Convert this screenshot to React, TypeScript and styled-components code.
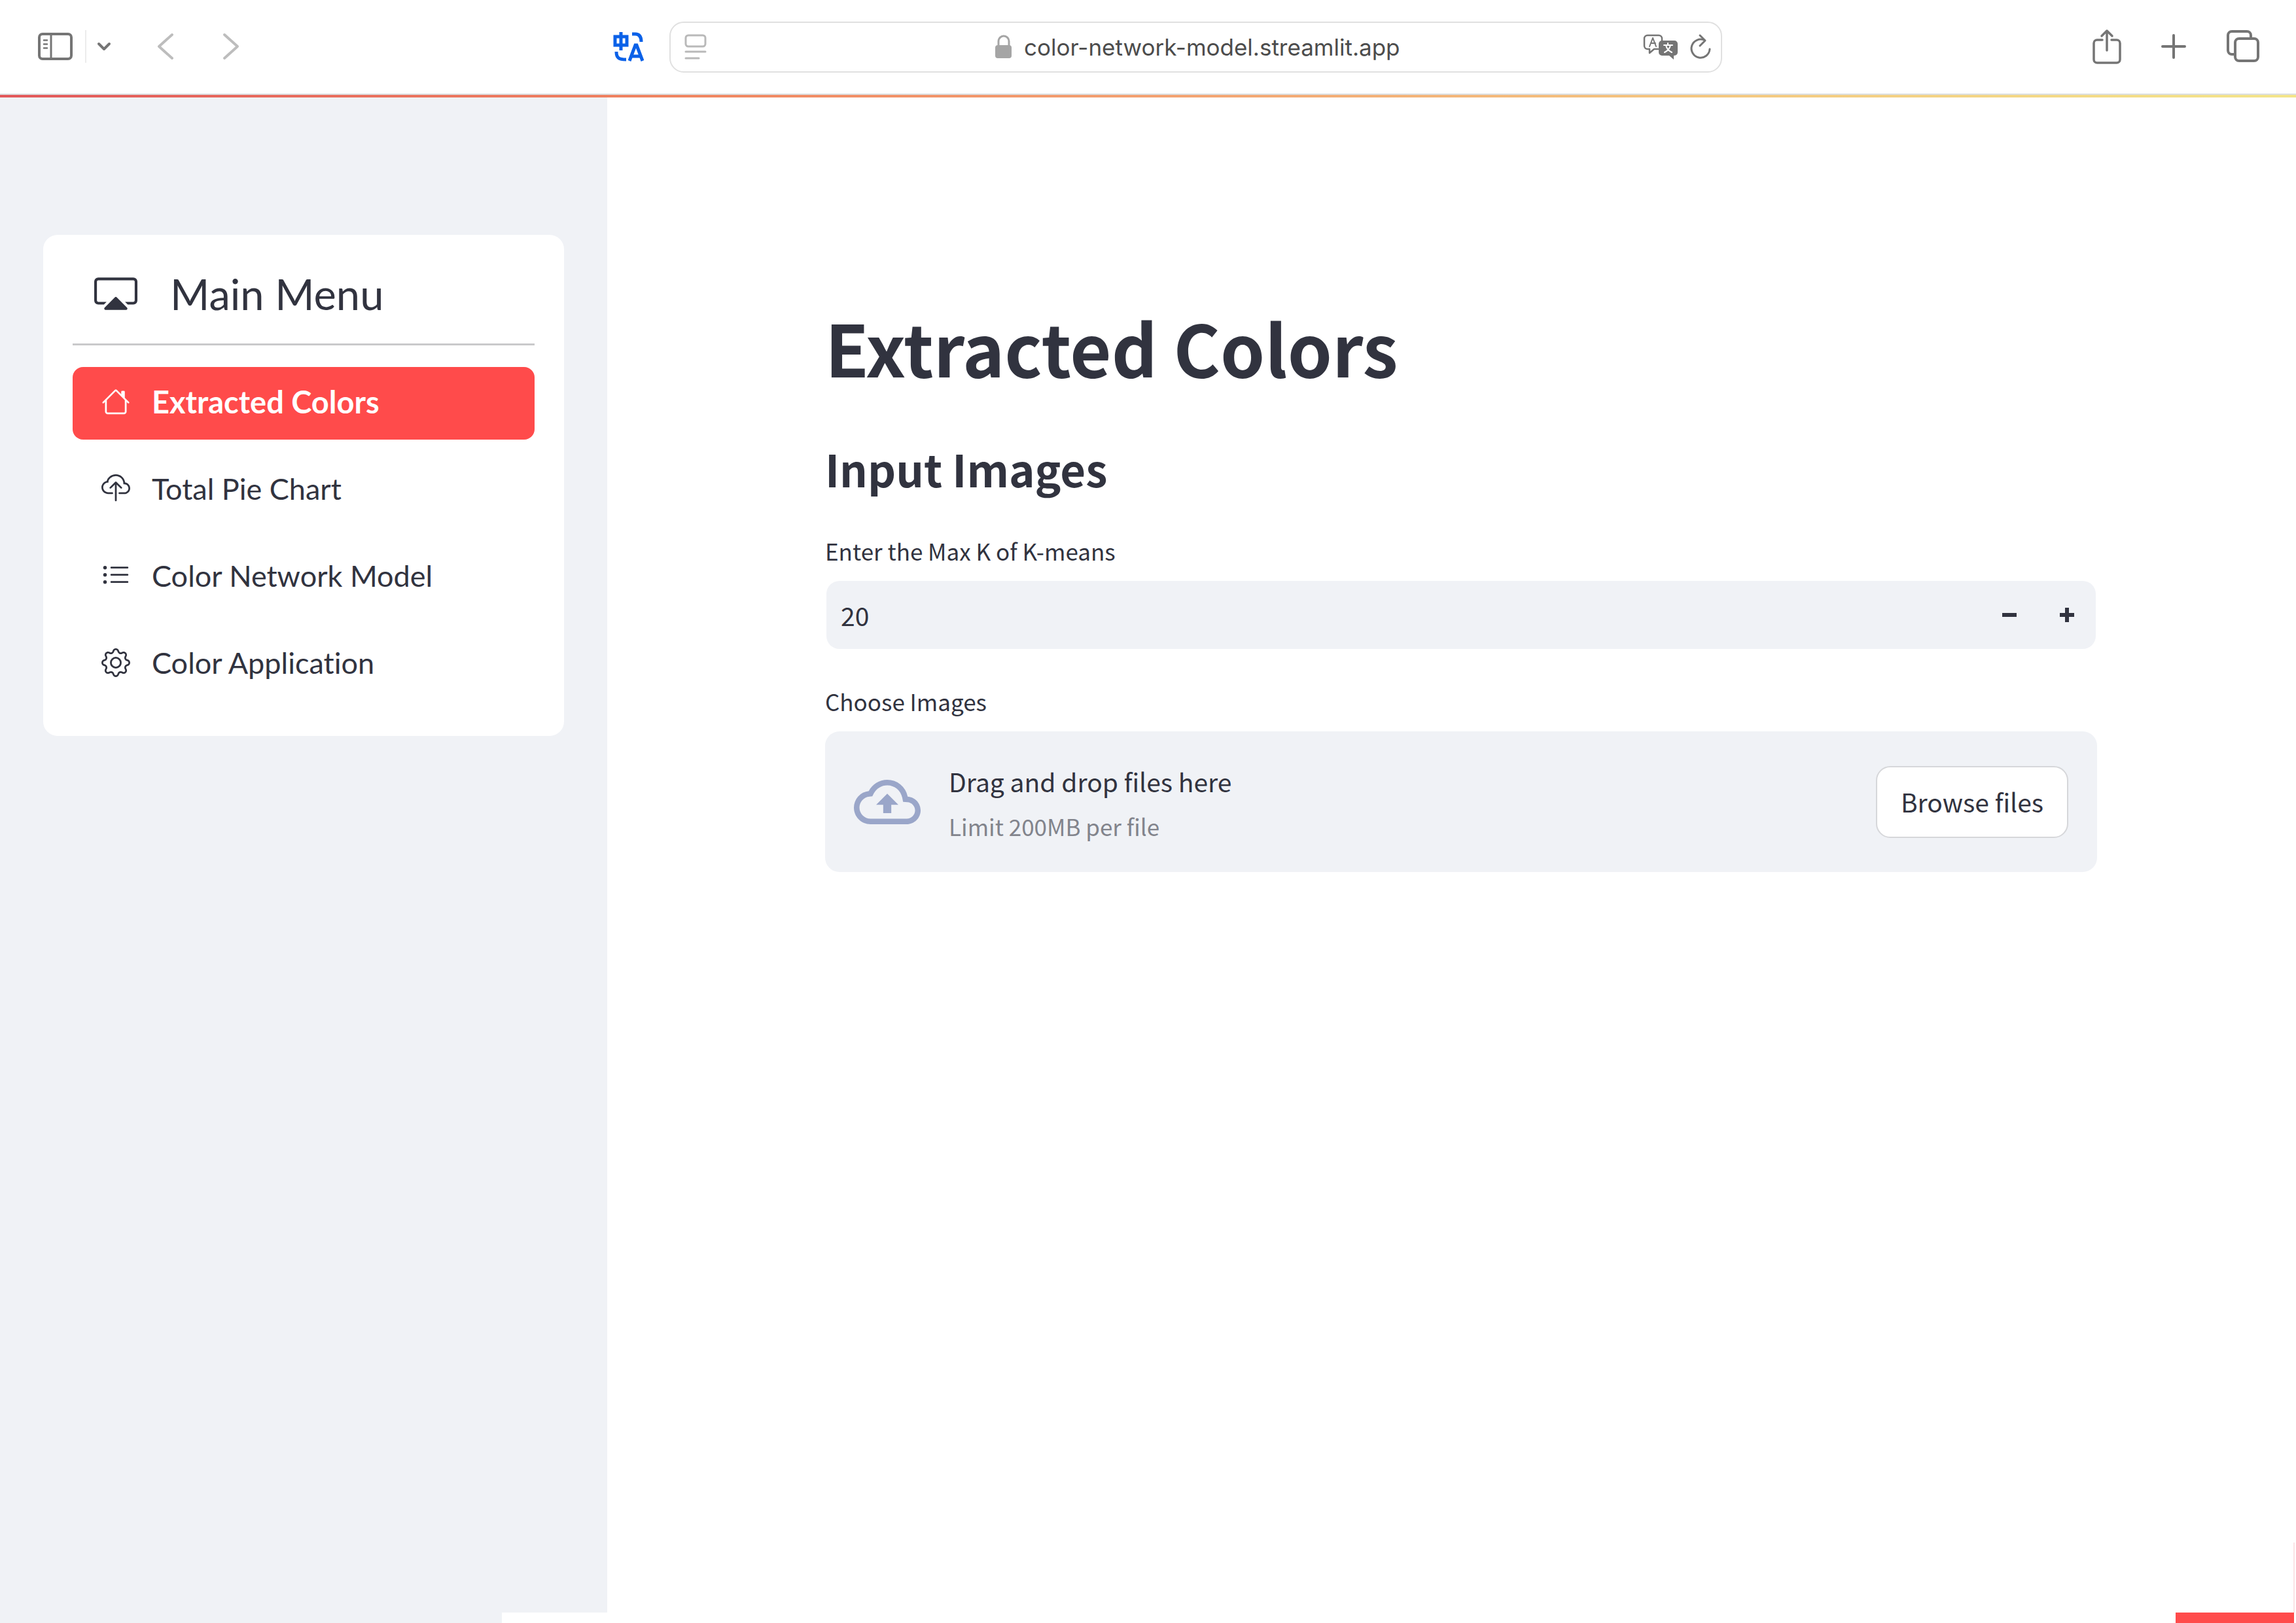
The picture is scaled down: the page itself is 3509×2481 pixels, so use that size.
import React, { useRef, useState } from 'react';
import styled, { createGlobalStyle } from 'styled-components';
import { BsCast, BsCloudUpload, BsGear, BsListUl } from 'react-icons/bs';
import { MdOutlineCloudUpload } from 'react-icons/md';

const ink = '#31333f';
const panel = '#f0f2f6';
const accent = '#ff4b4b';
const sans = '"Noto Sans CJK SC", "Noto Sans", sans-serif';
const menuSans = 'Lato, "Open Sans", sans-serif';

const GlobalStyle = createGlobalStyle`
  *, *::before, *::after { box-sizing: border-box; }
  body { margin: 0; background: #fff; color: ${ink}; font-family: ${sans}; }
  h1, h2, p { margin: 0; }
  svg { display: block; flex: none; }
  button { font: inherit; color: inherit; cursor: pointer; }
`;

const Page = styled.div`
  display: flex;
  flex-direction: column;
  min-height: 100vh;
`;

/* Browser toolbar */

const Toolbar = styled.header`
  display: grid;
  grid-template-columns: 29.15% 45.85% 1fr;
  align-items: center;
  height: 145px;
  border-bottom: 2px solid #dcdfe1;
  background: #fff;
  color: #757575;
`;

const ToolGroup = styled.div<{ $side: 'left' | 'right' }>`
  display: flex;
  align-items: center;
  padding: ${(p) => (p.$side === 'left' ? '0 36px 2px 54px' : '0 54px 2px 0')};
  justify-content: ${(p) => (p.$side === 'left' ? 'flex-start' : 'flex-end')};
  gap: ${(p) => (p.$side === 'left' ? '16px' : '56px')};
`;

const IconButton = styled.button<{ $tone?: string }>`
  display: flex;
  padding: 0;
  border: 0;
  background: none;
  color: ${(p) => p.$tone ?? 'inherit'};
`;

const Separator = styled.span`
  width: 2px;
  height: 50px;
  background: #ececec;
`;

const HistoryButtons = styled.div`
  display: flex;
  gap: 52px;
  margin-left: 45px;
`;

const TranslateSlot = styled.div`
  margin-left: auto;
`;

const AddressBar = styled.div`
  display: grid;
  grid-template-columns: 1fr auto 1fr;
  align-items: center;
  height: 78px;
  padding: 0 14px 0 20px;
  border: 2px solid #e0e0e0;
  border-radius: 22px;
`;

const Address = styled.label`
  display: flex;
  align-items: center;
  gap: 18px;
`;

const AddressInput = styled.input`
  field-sizing: content;
  padding: 0;
  border: 0;
  outline: 0;
  background: none;
  color: #4c4c4c;
  font: 400 35px/44px Inter, Roboto, sans-serif;
`;

const AddressActions = styled.div`
  display: flex;
  justify-content: flex-end;
  align-items: center;
  gap: 16px;
`;

const Decoration = styled.div`
  height: 4px;
  background: linear-gradient(90deg, #e2585a, #f08560 30%, #f3a070 50%, #f4c47f 72%, #f3e58a);
`;

/* Sidebar */

const Body = styled.div`
  display: flex;
  flex: 1;
`;

const Sidebar = styled.aside`
  flex: 0 0 928px;
  padding: 210px 66px 0;
  background: ${panel};
`;

const MenuCard = styled.nav`
  padding: 50px 45px 54px;
  border-radius: 22px;
  background: #fff;
  font-family: ${menuSans};
  font-variant-ligatures: none;
`;

const MenuTitle = styled.div`
  display: flex;
  align-items: center;
  gap: 50px;
  padding: 0 33px 36px;
  border-bottom: 3px solid #c9c9cb;
  margin-bottom: 33px;
  font-size: 65px;
  line-height: 80px;
  font-weight: 400;
`;

const MenuList = styled.div`
  display: flex;
  flex-direction: column;
  gap: 22px;
`;

const MenuLink = styled.a<{ $active: boolean }>`
  display: flex;
  align-items: center;
  gap: 33px;
  height: 111px;
  padding: 0 44px 6px;
  border-radius: 16px;
  background: ${(p) => (p.$active ? accent : 'transparent')};
  color: ${(p) => (p.$active ? '#fff' : ink)};
  font-size: ${(p) => (p.$active ? '47px' : '45px')};
  font-weight: ${(p) => (p.$active ? 700 : 400)};
  text-decoration: none;
`;

/* Main column */

const Main = styled.main`
  flex: 1;
  min-width: 0;
  padding: 315px 304px 0 333px;
`;

const PageTitle = styled.h1`
  font-size: 109px;
  line-height: 132px;
  font-weight: 700;
`;

const SectionTitle = styled.h2`
  margin: 78px 0 58px;
  font-size: 67px;
  line-height: 84px;
  font-weight: 700;
`;

const Fields = styled.div`
  display: flex;
  flex-direction: column;
  gap: 54px;
`;

const Field = styled.div`
  display: flex;
  flex-direction: column;
  gap: 20px;
`;

const FieldLabel = styled.label`
  font-size: 35px;
  line-height: 52px;
`;

const NumberBox = styled.div`
  display: flex;
  align-items: center;
  height: 104px;
  margin: 0 2px;
  border-radius: 20px;
  background: ${panel};
`;

const NumberInput = styled.input`
  flex: 1;
  min-width: 0;
  padding: 0 22px;
  border: 0;
  outline: 0;
  background: none;
  color: ${ink};
  font: 400 39px/60px ${sans};
  appearance: textfield;
  &::-webkit-inner-spin-button { appearance: none; margin: 0; }
`;

const StepButton = styled.button`
  display: flex;
  align-items: center;
  justify-content: center;
  width: 88px;
  height: 104px;
  padding: 0;
  border: 0;
  background: none;
`;

const Dropzone = styled.div`
  display: flex;
  align-items: center;
  gap: 43px;
  min-height: 215px;
  padding: 0 44px;
  border-radius: 22px;
  background: ${panel};
`;

const DropText = styled.div`
  display: flex;
  flex: 1;
  flex-direction: column;
  gap: 15px;
`;

const DropTitle = styled.p`
  font-size: 39px;
  line-height: 60px;
`;

const DropHint = styled.p`
  color: #82848c;
  font-size: 35px;
  line-height: 48px;
`;

const BrowseButton = styled.button`
  height: 110px;
  padding: 0 36px 2px;
  border: 2px solid #d6d7da;
  border-radius: 22px;
  background: #fff;
  font-size: 39px;
`;

const HiddenFile = styled.input`
  display: none;
`;

/* Strips that show along the bottom edge of the window */

const BottomEdge = styled.div`
  position: fixed;
  right: 0;
  bottom: 0;
  left: 767px;
  display: flex;
  justify-content: flex-end;
  height: 16px;
  padding-right: 3px;
  background: #fff;
`;

const BottomTab = styled.div`
  width: 181px;
  background: ${accent};
`;

const EdgeLine = styled.div`
  position: fixed;
  right: 2px;
  bottom: 0;
  width: 2px;
  height: 123px;
  background: #fbe3e5;
`;

/* Icons */

const SidebarIcon = () => (
  <svg width="60" height="50" viewBox="0 0 60 50" fill="none" stroke="currentColor" strokeLinecap="round">
    <rect x="6" y="6" width="49" height="38" rx="5" strokeWidth="4" />
    <path d="M24 6v38" strokeWidth="3" />
    <path d="M13 15.500h5M13 21.500h5M13 27.500h5" strokeWidth="2.500" />
  </svg>
);

const ChevronDown = () => (
  <svg width="22" height="16" viewBox="0 0 22 16" fill="none" stroke="currentColor" strokeWidth="4" strokeLinecap="round" strokeLinejoin="round">
    <path d="M3 4l8 8 8-8" />
  </svg>
);

const Arrow = ({ back = false }: { back?: boolean }) => (
  <svg width="46" height="44" viewBox="0 0 46 44" fill="none" stroke="currentColor" strokeWidth="4" strokeLinecap="round" strokeLinejoin="round">
    <path d={back ? 'M32 4L12 22l20 18' : 'M14 4l20 18-20 18'} />
  </svg>
);

const TranslateIcon = () => (
  <svg width="52" height="48" viewBox="0 0 52 48" fill="none" stroke="#0b61e8" strokeWidth="5">
    <path d="M5 9h18v13H5zM14 2v28" />
    <path d="M31 5h5c6 0 9 4 9 12M7 32c0 9 3 12 15 12" />
    <path d="M27 46l9-24h2l9 24M30 39h14" />
  </svg>
);

const ReaderIcon = () => (
  <svg width="36" height="42" viewBox="0 0 36 42" fill="none" stroke="#b9b9b9" strokeWidth="3" strokeLinecap="round">
    <rect x="3" y="3" width="30" height="17" rx="4" />
    <path d="M3 28h30M3 38h20" />
  </svg>
);

const LockIcon = () => (
  <svg width="26" height="38" viewBox="0 0 26 38" fill="none" stroke="#a5a5a5">
    <path d="M5 17V10a8 8 0 0 1 16 0v7" strokeWidth="3" />
    <rect x="0" y="16" width="25" height="20" rx="4" fill="#a5a5a5" stroke="none" />
  </svg>
);

const PageTranslateIcon = () => (
  <svg width="56" height="42" viewBox="0 0 56 42" fill="none" stroke="currentColor" strokeWidth="2.500" strokeLinejoin="round" strokeLinecap="round">
    <path d="M24 24h-6l-7 6v-6H8a5 5 0 0 1-5-5V8a5 5 0 0 1 5-5h17a5 5 0 0 1 5 5v3" />
    <path d="M11 20l5-13 5 13M13 15h7" strokeWidth="2" />
    <path d="M30 11h19a5 5 0 0 1 5 5v13a5 5 0 0 1-5 5h-1v6l-7-6H30a5 5 0 0 1-5-5V16a5 5 0 0 1 5-5z" fill="currentColor" stroke="none" />
    <path d="M33 18h13M39 15v3M36 18c1 5 5 9 9 11M43 18c-1 5-5 9-9 11" stroke="#fff" strokeWidth="2" />
  </svg>
);

const ReloadIcon = () => (
  <svg width="34" height="42" viewBox="0 0 34 42" fill="none" stroke="currentColor" strokeWidth="3" strokeLinecap="round" strokeLinejoin="round">
    <path d="M23 10.500A14 14 0 1 0 31 24" />
    <path d="M16 3l8 8-8 8" />
  </svg>
);

const ShareIcon = () => (
  <svg width="46" height="56" viewBox="0 0 46 56" fill="none" stroke="currentColor" strokeWidth="3.500" strokeLinecap="round" strokeLinejoin="round">
    <path d="M16 18H8a5 5 0 0 0-5 5v25a5 5 0 0 0 5 5h30a5 5 0 0 0 5-5V23a5 5 0 0 0-5-5h-8" />
    <path d="M23 34V4M15 12l8-8 8 8" />
  </svg>
);

const AddTabIcon = () => (
  <svg width="46" height="46" viewBox="0 0 46 46" fill="none" stroke="currentColor" strokeWidth="4" strokeLinecap="round">
    <path d="M23 6v34M6 23h34" />
  </svg>
);

const TabsIcon = () => (
  <svg width="54" height="54" viewBox="0 0 54 54" fill="none" stroke="currentColor" strokeWidth="4">
    <path d="M15 39h-5a6 6 0 0 1-6-6V10a6 6 0 0 1 6-6h23a6 6 0 0 1 6 6v5" />
    <rect x="15" y="15" width="35" height="34" rx="6" />
  </svg>
);

const HouseIcon = ({ size }: { size: number }) => (
  <svg width={size} height={size} viewBox="0 0 16 16" fill="currentColor" fillRule="evenodd">
    <path d="M2 13.500V7h1v6.500a.5.5 0 0 0 .5.5h9a.5.5 0 0 0 .5-.5V7h1v6.500a1.500 1.500 0 0 1-1.500 1.500h-9A1.500 1.500 0 0 1 2 13.500zm11-11V6l-2-2V2.500a.5.5 0 0 1 .5-.5h1a.5.5 0 0 1 .5.5z" />
    <path d="M7.293 1.500a1 1 0 0 1 1.414 0l6.647 6.646a.5.5 0 0 1-.708.708L8 2.207 1.354 8.854a.5.5 0 1 1-.708-.708L7.293 1.500z" />
  </svg>
);

const StepIcon = ({ plus = false }: { plus?: boolean }) => (
  <svg width="24" height="24" viewBox="0 0 24 24" fill="none" stroke="currentColor" strokeWidth="6">
    <path d={plus ? 'M1 12h22M12 1v22' : 'M1 12h22'} />
  </svg>
);

const menu = [
  { label: 'Extracted Colors', Icon: HouseIcon },
  { label: 'Total Pie Chart', Icon: BsCloudUpload },
  { label: 'Color Network Model', Icon: BsListUl },
  { label: 'Color Application', Icon: BsGear },
];

export default function App() {
  const [active, setActive] = useState(0);
  const [maxK, setMaxK] = useState(20);
  const fileRef = useRef<HTMLInputElement>(null);

  return (
    <Page>
      <GlobalStyle />
      <Toolbar>
        <ToolGroup $side="left">
          <IconButton aria-label="Toggle sidebar"><SidebarIcon /></IconButton>
          <Separator />
          <IconButton aria-label="Tab groups"><ChevronDown /></IconButton>
          <HistoryButtons>
            <IconButton $tone="#bdbdbd" aria-label="Back"><Arrow back /></IconButton>
            <IconButton $tone="#bdbdbd" aria-label="Forward"><Arrow /></IconButton>
          </HistoryButtons>
          <TranslateSlot>
            <IconButton aria-label="Translate"><TranslateIcon /></IconButton>
          </TranslateSlot>
        </ToolGroup>
        <AddressBar>
          <IconButton aria-label="Reader"><ReaderIcon /></IconButton>
          <Address>
            <LockIcon />
            <AddressInput aria-label="Address" defaultValue="color-network-model.streamlit.app" />
          </Address>
          <AddressActions>
            <IconButton aria-label="Translate page"><PageTranslateIcon /></IconButton>
            <IconButton aria-label="Reload"><ReloadIcon /></IconButton>
          </AddressActions>
        </AddressBar>
        <ToolGroup $side="right">
          <IconButton aria-label="Share"><ShareIcon /></IconButton>
          <IconButton aria-label="New tab"><AddTabIcon /></IconButton>
          <IconButton aria-label="Show tabs"><TabsIcon /></IconButton>
        </ToolGroup>
      </Toolbar>
      <Decoration />

      <Body>
        <Sidebar>
          <MenuCard>
            <MenuTitle><BsCast size={66} />Main Menu</MenuTitle>
            <MenuList>
              {menu.map(({ label, Icon }, i) => (
                <MenuLink key={label} href="#" $active={i === active} onClick={() => setActive(i)}>
                  <Icon size={44} />
                  {label}
                </MenuLink>
              ))}
            </MenuList>
          </MenuCard>
        </Sidebar>

        <Main>
          <PageTitle>Extracted Colors</PageTitle>
          <SectionTitle>Input Images</SectionTitle>
          <Fields>
            <Field>
              <FieldLabel htmlFor="max-k">Enter the Max K of K-means</FieldLabel>
              <NumberBox>
                <NumberInput
                  id="max-k"
                  type="number"
                  value={maxK}
                  onChange={(e) => setMaxK(Number(e.target.value))}
                />
                <StepButton aria-label="Decrease" onClick={() => setMaxK(maxK - 1)}><StepIcon /></StepButton>
                <StepButton aria-label="Increase" onClick={() => setMaxK(maxK + 1)}><StepIcon plus /></StepButton>
              </NumberBox>
            </Field>
            <Field>
              <FieldLabel htmlFor="images">Choose Images</FieldLabel>
              <Dropzone>
                <MdOutlineCloudUpload size={102} color="#9aa6c9" />
                <DropText>
                  <DropTitle>Drag and drop files here</DropTitle>
                  <DropHint>Limit 200MB per file</DropHint>
                </DropText>
                <HiddenFile id="images" type="file" multiple ref={fileRef} />
                <BrowseButton onClick={() => fileRef.current?.click()}>Browse files</BrowseButton>
              </Dropzone>
            </Field>
          </Fields>
        </Main>
      </Body>
      <EdgeLine />
      <BottomEdge><BottomTab /></BottomEdge>
    </Page>
  );
}
